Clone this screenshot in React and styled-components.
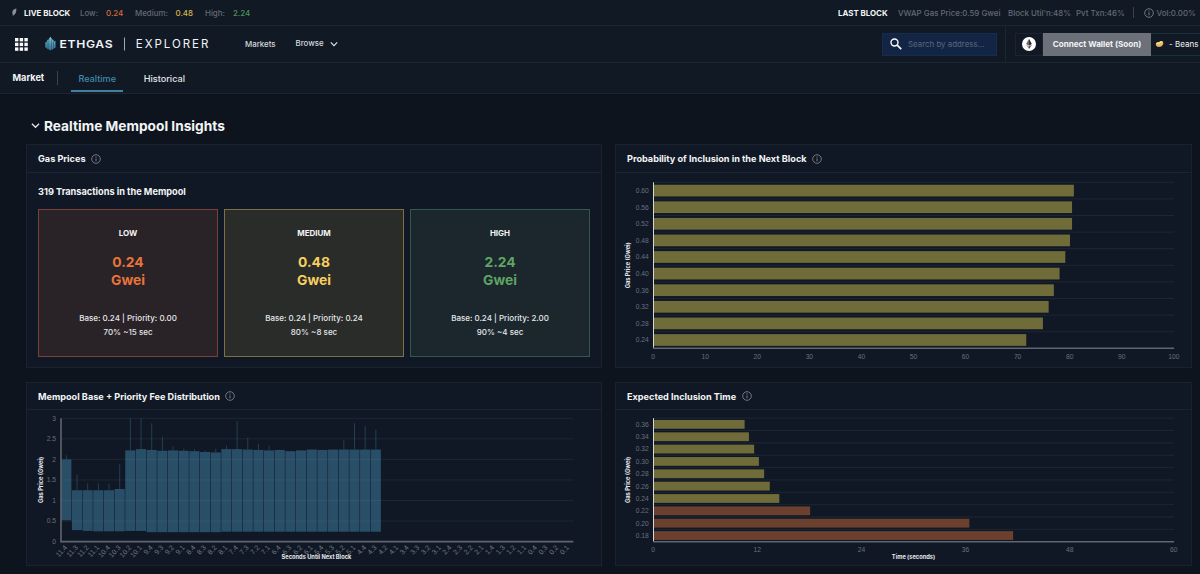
import styled, { createGlobalStyle } from "styled-components";

const GlobalStyle = createGlobalStyle`
  * {
    box-sizing: border-box;
  }
  body {
    margin: 0;
    background: #0d141d;
    color: #f3f4f6;
    font-family: Inter, sans-serif;
    overflow: hidden;
  }
  svg {
    display: block;
    flex-shrink: 0;
  }
`;

const probability = [
  ["0.60", 80.75],
  ["0.56", 80.4],
  ["0.52", 80.4],
  ["0.48", 80],
  ["0.44", 79.1],
  ["0.40", 78],
  ["0.36", 76.9],
  ["0.32", 75.9],
  ["0.28", 74.8],
  ["0.24", 71.6],
];

const inclusion = [
  ["0.36", 10.5],
  ["0.34", 11],
  ["0.32", 11.6],
  ["0.30", 12.15],
  ["0.28", 12.75],
  ["0.26", 13.4],
  ["0.24", 14.5],
  ["0.22", 18.05, "low"],
  ["0.20", 36.4, "low"],
  ["0.18", 41.45, "low"],
];

// [bottom, top, whisker]
const fees = [
  [0.52, 2.0, 2.1],
  [0.28, 1.25, 1.63],
  [0.26, 1.25, 1.42],
  [0.25, 1.25, 1.42],
  [0.25, 1.25, 1.4],
  [0.25, 1.28, 1.88],
  [0.26, 2.22, 3],
  [0.26, 2.25, 3],
  [0.23, 2.23, 2.88],
  [0.23, 2.21, 2.55],
  [0.23, 2.22, 2.32],
  [0.23, 2.21, 2.26],
  [0.23, 2.2, 2.25],
  [0.23, 2.18, 2.22],
  [0.23, 2.17, 2.26],
  [0.24, 2.25, 2.33],
  [0.24, 2.25, 2.93],
  [0.24, 2.24, 2.53],
  [0.24, 2.23, 2.38],
  [0.24, 2.22, 2.33],
  [0.24, 2.23, 2.23],
  [0.24, 2.2, 2.2],
  [0.24, 2.22, 2.22],
  [0.24, 2.24, 2.24],
  [0.24, 2.23, 2.23],
  [0.24, 2.24, 2.24],
  [0.24, 2.24, 2.47],
  [0.24, 2.24, 2.88],
  [0.24, 2.24, 2.81],
  [0.24, 2.24, 2.72],
];

const seconds = Array.from(
  { length: 48 },
  (_, i) => `${11 - Math.floor(i / 4)}.${4 - (i % 4)}`
);

const tiers = [
  {
    name: "LOW",
    price: "0.24",
    fee: "Base: 0.24 | Priority: 0.00",
    odds: "70% ~15 sec",
    color: "#e8743b",
    border: "#7a4136",
    bg: "#292226",
  },
  {
    name: "MEDIUM",
    price: "0.48",
    fee: "Base: 0.24 | Priority: 0.24",
    odds: "80% ~8 sec",
    color: "#f8cf5f",
    border: "#7d7144",
    bg: "#2a2c2a",
  },
  {
    name: "HIGH",
    price: "2.24",
    fee: "Base: 0.24 | Priority: 2.00",
    odds: "90% ~4 sec",
    color: "#5fa463",
    border: "#35574a",
    bg: "#1b272d",
  },
];

const InfoIcon = () => (
  <svg width="10" height="10" viewBox="0 0 10 10" fill="none">
    <circle cx="5" cy="5" r="4.3" stroke="#7b818b" strokeWidth="0.9" />
    <path d="M5 4.4v2.9" stroke="#7b818b" strokeWidth="1" />
    <circle cx="5" cy="2.9" r="0.6" fill="#7b818b" />
  </svg>
);

const Chevron = ({ size }) => (
  <svg width={size} height={size} viewBox="0 0 8 8" fill="none">
    <path d="M0.8 2.4 4 5.6l3.2-3.2" stroke="#e5e7eb" strokeWidth="1.1" />
  </svg>
);

const LeafIcon = () => (
  <svg width="5" height="9" viewBox="0 0 5 9">
    <path
      d="M4.4 0.6C2 1 0.3 2.4 0.3 4.6c0 .9.2 1.5.6 2.1L0.6 8.4 1.8 7.1C3.6 6.3 4.4 4.2 4.4.6Z"
      fill="#8b9099"
    />
  </svg>
);

const AppsIcon = () => (
  <svg width="13" height="13" viewBox="0 0 13 13" fill="#f9fafb">
    {[0, 4.7, 9.4].map((y) =>
      [0, 4.7, 9.4].map((x) => (
        <rect key={`${x}-${y}`} x={x} y={y} width="3.4" height="3.4" />
      ))
    )}
  </svg>
);

const Logo = () => (
  <svg width="170" height="16" viewBox="0 0 170 16">
    <defs>
      <linearGradient id="flame" x1="0" y1="0" x2="0" y2="16" gradientUnits="userSpaceOnUse">
        <stop offset="0.1" stopColor="#7cc6d2" />
        <stop offset="0.5" stopColor="#4796b4" />
        <stop offset="1" stopColor="#2f6c93" />
      </linearGradient>
    </defs>
    <g fill="url(#flame)">
      <path d="M5.4 0.8 6.7 2.4V13.6L5.4 14.6 4.1 13.6V2.4Z" />
      <path d="M2.2 4 3.8 3.2V13.6L2.2 13Z" />
      <path d="M0.3 6.4 1.9 5.4V12.2L0.3 11.2Z" />
      <path d="M7 3.2 8.6 4V13L7 13.6Z" />
      <path d="M8.9 5.4 10.5 4.8V11.4L8.9 12.4Z" />
    </g>
    <LogoText
      x="14.4"
      y="11.8"
      $weight={600}
      textLength="54"
      lengthAdjust="spacingAndGlyphs"
    >
      ETHGAS
    </LogoText>
    <path d="M79.5 1.5V14.5" stroke="#a3a8b0" strokeWidth="1" />
    <LogoText x="90.8" y="12.2" $weight={400} $spread textLength="72.5">
      EXPLORER
    </LogoText>
  </svg>
);

const SearchIcon = () => (
  <svg width="12" height="12" viewBox="0 0 12 12" fill="none" stroke="#f9fafb">
    <circle cx="4.5" cy="4.5" r="3.5" strokeWidth="1.4" />
    <path d="M7.2 7.2 11.2 11.2" strokeWidth="1.7" />
  </svg>
);

const EthIcon = () => (
  <svg width="14" height="14" viewBox="0 0 14 14">
    <circle cx="7" cy="7" r="7" fill="#fff" />
    <path d="M7 1.8 4.1 7.1 7 8.8Z" fill="#6c6c6c" />
    <path d="M7 1.8 9.9 7.1 7 8.8Z" fill="#2f2f2f" />
    <path d="M4.1 7.8 7 9.5V12Z" fill="#8a8a8a" />
    <path d="M9.9 7.8 7 9.5V12Z" fill="#3f3f3f" />
  </svg>
);

const BeanIcon = () => (
  <svg width="9" height="8" viewBox="0 0 9 8">
    <path
      d="M1 3.3C1.6 2 2.7 2.3 3.8 1.9 5 1.4 5.6.7 6.9 1 8.3 1.4 8.6 3 8 4.5 7.3 6.2 5.5 7 3.6 7 1.5 6.9.3 5.1 1 3.3Z"
      fill="#e9b95c"
    />
    <path
      d="M1.7 3.6C2.6 2.9 4.2 3.2 5.2 2.5 6 2 6.5 1.7 7 2"
      stroke="#f9e3a4"
      strokeWidth="1.3"
      fill="none"
    />
  </svg>
);

const HorizontalBars = ({ data, height, top, bottom, barHeight, max, step, label }) => {
  const left = 37.5;
  const width = 520.6;
  const row = (bottom - top) / data.length;
  const ticks = Array.from({ length: max / step + 1 }, (_, i) => i * step);
  return (
    <svg width="575" height={height} viewBox={`0 0 575 ${height}`}>
      {data.map(([name], i) => (
        <GridLine key={name} x1={left} x2={left + width} y1={top + row * i} y2={top + row * i} />
      ))}
      {data.map(([name, value, kind], i) => (
        <g key={name}>
          <rect
            x={left}
            y={top + row * (i + 0.5) - barHeight / 2}
            width={(value / max) * width}
            height={barHeight}
            fill={kind === "low" ? "#6c402e" : "#6f6c39"}
          />
          <Tick x="32.8" y={top + row * (i + 0.5) + 2.4} textAnchor="end">
            {name}
          </Tick>
        </g>
      ))}
      <Axis d={`M${left} ${top}V${bottom}`} $bright />
      <Axis d={`M${left - 0.5} ${bottom}H${left + width}`} $wide />
      {ticks.map((t) => (
        <Tick key={t} x={left + (t / max) * width - 0.3} y={bottom + 10.3} textAnchor="middle">
          {t}
        </Tick>
      ))}
      <AxisTitle transform={`translate(14 ${(top + bottom) / 2}) rotate(-90)`}>
        Gas Price (Gwei)
      </AxisTitle>
      {label && (
        <AxisTitle x={left + width / 2 - 0.3} y={bottom + 17.3}>
          {label}
        </AxisTitle>
      )}
    </svg>
  );
};

const FeeChart = () => {
  const left = 34;
  const width = 512.3;
  const bottom = 131.6;
  const unit = 41.1;
  const col = width / seconds.length;
  const y = (v) => bottom - v * unit;
  return (
    <svg width="574" height="155" viewBox="0 0 574 155">
      {fees.map(([low, high, whisker], i) => (
        <g key={seconds[i]}>
          <rect
            x={left + col * i + 0.2}
            y={y(high)}
            width={col - 0.5}
            height={(high - low) * unit}
            fill="#284f67"
          />
          <path
            d={`M${left + col * (i + 0.5)} ${y(high)}V${y(whisker)}`}
            stroke="#223f50"
            strokeWidth="1"
          />
        </g>
      ))}
      {[0.5, 1, 1.5, 2, 2.5, 3].map((v) => (
        <GridLine key={v} x1={left} x2={left + width} y1={y(v)} y2={y(v)} />
      ))}
      {[0, 0.5, 1, 1.5, 2, 2.5, 3].map((v) => (
        <Tick key={v} x="29" y={y(v) + 2.2} textAnchor="end">
          {v}
        </Tick>
      ))}
      <Axis d={`M${left} ${y(3)}V${bottom + 1}`} $wide />
      <Axis d={`M${left} ${bottom}H${left + width}`} $wide />
      {seconds.map((s, i) => (
        <Tick
          key={s}
          transform={`translate(${left + col * (i + 0.5) + 1.4} ${bottom + 6.4}) rotate(-47)`}
          textAnchor="end"
          $tilted
        >
          {s}
        </Tick>
      ))}
      <AxisTitle transform={`translate(15.6 ${y(1.5)}) rotate(-90)`}>
        Gas Price (Gwei)
      </AxisTitle>
      <AxisTitle x={left + width / 2 - 0.7} y={bottom + 17.3}>
        Seconds Until Next Block
      </AxisTitle>
    </svg>
  );
};

const Panel = ({ title, compact, children }) => (
  <PanelBox>
    <PanelHeader $compact={compact}>
      {title}
      <InfoIcon />
    </PanelHeader>
    {children}
  </PanelBox>
);

const App = () => (
  <>
    <GlobalStyle />
    <Page>
      <StatusBar>
        <LeafIcon />
        <Status $w={56} $ml={7} $strong>LIVE BLOCK</Status>
        <Status $w={26}>Low:</Status>
        <Status $w={29} $color="#d9683a">0.24</Status>
        <Status $w={40.5}>Medium:</Status>
        <Status $w={29.5} $color="#d6b451">0.48</Status>
        <Status $w={28}>High:</Status>
        <Status $w={20} $color="#4d9655">2.24</Status>
        <Spacer />
        <Status $w={60} $strong>LAST BLOCK</Status>
        <Status $w={110}>VWAP Gas Price:0.59 Gwei</Status>
        <Status $w={68}>Block Util'n:48%</Status>
        <Status $w={57}>Pvt Txn:46%</Status>
        <Rule $h={11} />
        <VolIcon>
          <InfoIcon />
        </VolIcon>
        <Status $w={43.5}>Vol:0.00%</Status>
      </StatusBar>
      <Header>
        <AppsIcon />
        <LogoLink>
          <Logo />
        </LogoLink>
        <NavItem $w={50.5}>Markets</NavItem>
        <NavItem $w={34} $raised>Browse</NavItem>
        <Chevron size={8} />
        <Spacer />
        <Search>
          <SearchIcon />
          Search by address...
        </Search>
        <Wallet>
          <Chain>
            <EthIcon />
          </Chain>
          <Connect>Connect Wallet (Soon)</Connect>
          <Beans>
            <BeanIcon />
            - Beans
          </Beans>
        </Wallet>
      </Header>
      <Tabs>
        <TabsTitle>Market</TabsTitle>
        <Rule $h={14} />
        <Tab $active>Realtime</Tab>
        <Tab>Historical</Tab>
      </Tabs>
      <Main>
        <Heading>
          <Chevron size={9} />
          Realtime Mempool Insights
        </Heading>
        <Grid>
          <Panel title="Gas Prices">
            <Mempool>319 Transactions in the Mempool</Mempool>
            <Cards>
              {tiers.map((t) => (
                <Card key={t.name} $bg={t.bg} $border={t.border}>
                  <CardName>{t.name}</CardName>
                  <Price $color={t.color}>
                    {t.price}
                    <br />
                    Gwei
                  </Price>
                  <Detail>
                    {t.fee}
                    <br />
                    {t.odds}
                  </Detail>
                </Card>
              ))}
            </Cards>
          </Panel>
          <Panel title="Probability of Inclusion in the Next Block">
            <HorizontalBars
              data={probability}
              height={194}
              top={9.3}
              bottom={175.3}
              barHeight={11.7}
              max={100}
              step={10}
            />
          </Panel>
          <Panel title="Mempool Base + Priority Fee Distribution" compact>
            <FeeChart />
          </Panel>
          <Panel title="Expected Inclusion Time" compact>
            <HorizontalBars
              data={inclusion}
              height={155}
              top={8.2}
              bottom={131.7}
              barHeight={8.8}
              max={60}
              step={12}
              label="Time (seconds)"
            />
          </Panel>
        </Grid>
      </Main>
    </Page>
  </>
);

export default App;

const Page = styled.div`
  width: 1200px;
  height: 574px;
  overflow: hidden;
`;

const Bar = styled.div`
  display: flex;
  align-items: center;
  background: #111925;
  border-bottom: 1px solid #1b2431;
`;

const StatusBar = styled(Bar)`
  height: 26px;
  padding-left: 12px;
`;

const Status = styled.span`
  width: ${({ $w }) => $w}px;
  margin-left: ${({ $ml }) => $ml || 0}px;
  flex-shrink: 0;
  white-space: nowrap;
  font-size: 7.9px;
  font-weight: ${({ $strong }) => ($strong ? 700 : 500)};
  color: ${({ $strong, $color }) => ($strong ? "#f3f4f6" : $color || "#646a74")};
`;

const Spacer = styled.div`
  flex: 1;
`;

const Rule = styled.div`
  width: 1px;
  height: ${({ $h }) => $h}px;
  background: #3b424e;
`;

const VolIcon = styled.div`
  margin: 0 2.5px 0 10px;
`;

const Header = styled(Bar)`
  height: 37px;
  padding-left: 15px;
`;

const LogoLink = styled.div`
  margin: 0 30.5px 0 16.5px;
`;

const LogoText = styled.text`
  font-family: Inter, sans-serif;
  font-size: ${({ $spread }) => ($spread ? 11.5 : 10.6)}px;
  font-weight: ${({ $weight }) => $weight};
  letter-spacing: ${({ $spread }) => ($spread ? 0 : 0.6)}px;
  fill: #f3f4f6;
`;

const NavItem = styled.span`
  width: ${({ $w }) => $w}px;
  font-size: 7.9px;
  font-weight: 500;
  color: #d5d8dd;
  padding-bottom: ${({ $raised }) => ($raised ? 2 : 1)}px;
`;

const Search = styled.div`
  display: flex;
  align-items: center;
  gap: 6px;
  width: 115px;
  height: 23px;
  padding-left: 7px;
  background: #132544;
  border: 1px solid #172b4b;
  color: #596780;
  font-size: 7.9px;
  white-space: nowrap;
`;

const Wallet = styled.div`
  display: flex;
  align-items: center;
  width: 195px;
  height: 36px;
  margin-left: 8px;
  padding-left: 9px;
  border-left: 1px solid #1b2431;
`;

const Chain = styled.div`
  display: flex;
  align-items: center;
  justify-content: center;
  width: 28px;
  height: 23px;
  border: 1px solid #1b2431;
`;

const Connect = styled.div`
  width: 108px;
  height: 23px;
  line-height: 23px;
  text-align: center;
  background: #6b7079;
  color: #f3f4f6;
  font-size: 8.1px;
  font-weight: 700;
  white-space: nowrap;
`;

const Beans = styled.div`
  display: flex;
  flex: 1;
  align-items: center;
  gap: 5px;
  height: 23px;
  padding-left: 4px;
  border-top: 1px solid #18323a;
  border-bottom: 1px solid #18323a;
  font-size: 8px;
  white-space: nowrap;
`;

const Tabs = styled(Bar)`
  height: 31px;
  padding-left: 12.5px;
`;

const TabsTitle = styled.div`
  width: 44.5px;
  padding-bottom: 1px;
  font-size: 9.2px;
  font-weight: 700;
`;

const Tab = styled.div`
  align-self: flex-start;
  height: 29px;
  margin-left: 13px;
  padding: 3px 7.4px 0;
  line-height: 26.5px;
  font-size: 9.1px;
  font-weight: 500;
  color: ${({ $active }) => ($active ? "#3f8cae" : "#e5e7eb")};
  border-bottom: 2px solid ${({ $active }) => ($active ? "#3f82a3" : "transparent")};
`;

const Main = styled.main`
  padding: 22px 8px 0 26px;
`;

const Heading = styled.h1`
  display: flex;
  align-items: center;
  gap: 4px;
  height: 19px;
  margin: 0 0 9px 5px;
  font-size: 13.7px;
  font-weight: 700;
`;

const Grid = styled.div`
  display: grid;
  grid-template-columns: 576px 577px;
  grid-template-rows: 224px 184px;
  gap: 14px 13px;
`;

const PanelBox = styled.section`
  background: #111825;
  border: 1px solid #1a222e;
`;

const PanelHeader = styled.h2`
  display: flex;
  align-items: center;
  gap: 5.5px;
  height: ${({ $compact }) => ($compact ? 27 : 28)}px;
  margin: 0;
  padding-left: 11px;
  border-bottom: 1px solid #1b2430;
  font-size: 9.15px;
  font-weight: 700;
`;

const Mempool = styled.h3`
  margin: 0 0 0 11px;
  height: 36px;
  line-height: 37px;
  font-size: 9.2px;
  font-weight: 700;
`;

const Cards = styled.div`
  display: flex;
  gap: 6px;
  padding: 0 11px;
`;

const Card = styled.div`
  display: flex;
  flex: 1;
  flex-direction: column;
  align-items: center;
  height: 148px;
  padding-top: 17px;
  text-align: center;
  background: ${({ $bg }) => $bg};
  border: 1px solid ${({ $border }) => $border};
`;

const CardName = styled.div`
  font-size: 8px;
  font-weight: 700;
  line-height: 12px;
`;

const Price = styled.div`
  margin-top: 14px;
  font-size: 13.8px;
  font-weight: 700;
  line-height: 18.3px;
  color: ${({ $color }) => $color};
`;

const Detail = styled.div`
  margin-top: 21px;
  font-size: 8px;
  font-weight: 500;
  line-height: 14.5px;
  color: #e5e7eb;
`;

const GridLine = styled.line`
  stroke: rgba(148, 163, 184, 0.1);
  stroke-width: 1;
`;

const Axis = styled.path`
  stroke: ${({ $bright }) => ($bright ? "#d5d8d8" : "#60656f")};
  stroke-width: ${({ $wide }) => ($wide ? 1.6 : 1)};
`;

const Tick = styled.text`
  font-family: "Liberation Sans", sans-serif;
  font-size: ${({ $tilted }) => ($tilted ? 7 : 6.7)}px;
  fill: ${({ $tilted }) => ($tilted ? "#737983" : "#6a707a")};
`;

const AxisTitle = styled.text`
  font-family: Inter, sans-serif;
  font-size: 5.7px;
  font-weight: 700;
  fill: #e5e7eb;
  text-anchor: middle;
`;
